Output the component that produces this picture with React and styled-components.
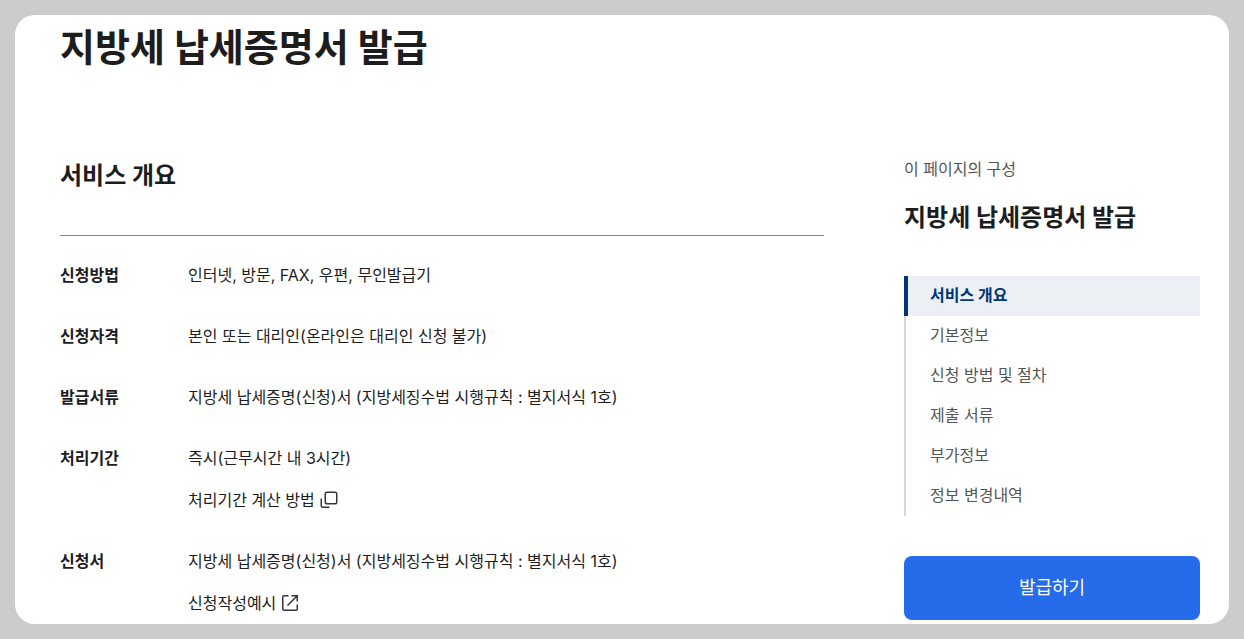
import React, { useState } from "react";
import styled, { createGlobalStyle } from "styled-components";

const GlobalStyle = createGlobalStyle`
    * { box-sizing: border-box; }
    body {
        margin: 0;
        background: #ccc;
        color: #1d1d1d;
        font-family: Inter, "Noto Sans CJK KR", sans-serif;
        font-size: 16px;
        line-height: 26px;
    }
`;

const FORM_NAME = "지방세 납세증명(신청)서 (지방세징수법 시행규칙 : 별지서식 1호)";

const OVERVIEW = [
    { term: "신청방법", text: "인터넷, 방문, FAX, 우편, 무인발급기" },
    { term: "신청자격", text: "본인 또는 대리인(온라인은 대리인 신청 불가)" },
    { term: "발급서류", text: FORM_NAME },
    { term: "처리기간", text: "즉시(근무시간 내 3시간)", link: "처리기간 계산 방법", icon: "popup" },
    { term: "신청서", text: FORM_NAME, link: "신청작성예시", icon: "go" },
];

const SECTIONS = ["서비스 개요", "기본정보", "신청 방법 및 절차", "제출 서류", "부가정보", "정보 변경내역"];

const Page = styled.div`
    padding: 15px;
`;
const Card = styled.div`
    padding: 8px 29px 4px 45px;
    border-radius: 20px;
    background: #fff;
`;
const Title = styled.h1`
    margin: 0;
    font-size: 38px;
    font-weight: 700;
    line-height: 48px;
`;
const Columns = styled.div`
    display: flex;
    align-items: flex-start;
    gap: 80px;
    padding-top: 85px;
`;
const Main = styled.main`
    flex: 1;
    min-width: 0;
`;
const SectionTitle = styled.h2`
    margin: 0;
    padding-bottom: 39px;
    border-bottom: 1px solid #8a8a8a;
    font-size: 24px;
    font-weight: 700;
    line-height: 40px;
`;
const List = styled.dl`
    display: flex;
    flex-direction: column;
    gap: 35px;
    margin: 0;
    padding-top: 26px;
`;
const Row = styled.div`
    display: flex;
`;
const Term = styled.dt`
    flex: 0 0 128px;
    font-weight: 700;
`;
const Detail = styled.dd`
    display: flex;
    flex-direction: column;
    align-items: flex-start;
    gap: 16px;
    margin: 0;
`;
const TextLink = styled.a`
    display: flex;
    align-items: center;
    gap: 4px;
    color: inherit;
    text-decoration: none;
`;
const Side = styled.aside`
    flex: 0 0 296px;
`;
const Caption = styled.p`
    margin: 0;
    color: #555;
`;
const SideTitle = styled.h2`
    margin: 0;
    padding: 16px 0 38px;
    font-size: 24px;
    font-weight: 700;
    line-height: 40px;
`;
const Nav = styled.nav`
    display: flex;
    flex-direction: column;
`;
const NavLink = styled.a`
    padding: 6px 0 8px ${props => (props.$active ? "22px" : "24px")};
    border-left: ${props => (props.$active ? "4px solid #003675" : "2px solid #cdd9e6")};
    background: ${props => (props.$active ? "#ecf0f5" : "transparent")};
    color: ${props => (props.$active ? "#003675" : "#555")};
    font-weight: ${props => (props.$active ? 700 : 400)};
    text-decoration: none;
`;
const IssueButton = styled.button`
    width: 100%;
    height: 64px;
    margin-top: 40px;
    padding: 0 0 4px;
    border: 0;
    border-radius: 8px;
    background: #256bea;
    color: #fff;
    font-family: inherit;
    font-size: 18px;
    cursor: pointer;
`;

const Svg = styled.svg`
    width: 20px;
    height: 20px;
    fill: none;
    stroke: #33363d;
    stroke-width: 1.5;
`;

const PopupIcon = () => (
    <Svg viewBox="0 0 20 20" aria-hidden="true">
        <rect x="6.25" y="2.25" width="11.5" height="11.5" rx="1.8" />
        <path d="M2.25 8.5V15.5Q2.25 17.25 4 17.25H10.5" />
    </Svg>
);

const GoIcon = () => (
    <Svg viewBox="0 0 20 20" aria-hidden="true">
        <path d="M8.5 2.75H4Q2.75 2.75 2.75 4V16Q2.75 17.25 4 17.25H16Q17.25 17.25 17.25 16V11.5" />
        <path d="M11.5 2.75H17.25V8.5M17.25 2.75L7.5 12.5" />
    </Svg>
);

const OverviewRow = ({ item }) => (
    <Row>
        <Term>{item.term}</Term>
        <Detail>
            <span>{item.text}</span>
            {item.link && (
                <TextLink href="#">
                    {item.link}
                    {item.icon === "popup" ? <PopupIcon /> : <GoIcon />}
                </TextLink>
            )}
        </Detail>
    </Row>
);

const App = () => {
    const [current, setCurrent] = useState(0);

    return (
        <Page>
            <GlobalStyle />
            <Card>
                <Title>지방세 납세증명서 발급</Title>
                <Columns>
                    <Main>
                        <SectionTitle>서비스 개요</SectionTitle>
                        <List>
                            {OVERVIEW.map(item => (
                                <OverviewRow key={item.term} item={item} />
                            ))}
                        </List>
                    </Main>
                    <Side>
                        <Caption>이 페이지의 구성</Caption>
                        <SideTitle>지방세 납세증명서 발급</SideTitle>
                        <Nav>
                            {SECTIONS.map((name, index) => (
                                <NavLink
                                    key={name}
                                    href="#"
                                    $active={index === current}
                                    onClick={() => setCurrent(index)}
                                >
                                    {name}
                                </NavLink>
                            ))}
                        </Nav>
                        <IssueButton type="button">발급하기</IssueButton>
                    </Side>
                </Columns>
            </Card>
        </Page>
    );
};

export default App;
